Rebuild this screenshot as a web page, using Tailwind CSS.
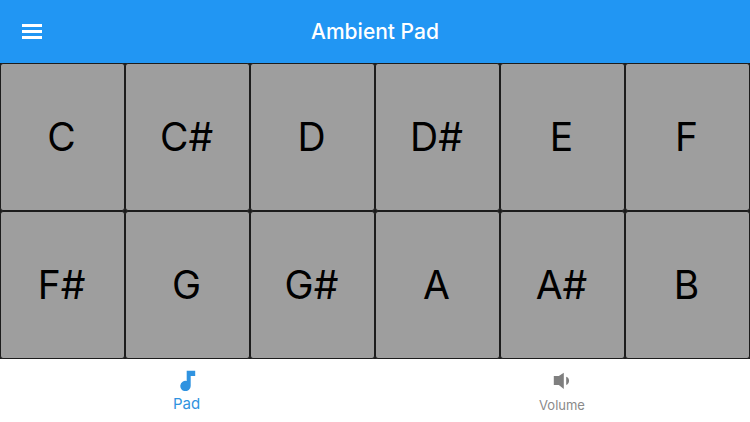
<!DOCTYPE html>
<html lang="en">
<head>
  <meta charset="UTF-8" />
  <title>Ambient Pad</title>
  <script src="https://cdn.jsdelivr.net/npm/@tailwindcss/browser@4"></script>
</head>
<body class="bg-white w-[750px] h-[422px] overflow-hidden flex flex-col font-['Inter',sans-serif]">
  <header class="h-[63px] bg-[#2196f3] flex items-center relative shrink-0">
    <button class="ml-[22px] w-[20px] flex flex-col gap-[3.5px]">
      <span class="block h-[2.5px] bg-white"></span>
      <span class="block h-[2.5px] bg-white"></span>
      <span class="block h-[2.5px] bg-white"></span>
    </button>
    <h1 class="absolute inset-x-0 text-center text-white text-[21px] font-medium">Ambient Pad</h1>
  </header>

  <main class="h-[296px] shrink-0 grid grid-cols-6 grid-rows-2 bg-[#1c1c1c] text-black text-[39px]">
    <div class="bg-[#9e9e9e] border border-[#1c1c1c] rounded-[3px] flex items-center justify-center pr-[2px]">C</div>
    <div class="bg-[#9e9e9e] border border-[#1c1c1c] rounded-[3px] flex items-center justify-center pr-[2px]">C#</div>
    <div class="bg-[#9e9e9e] border border-[#1c1c1c] rounded-[3px] flex items-center justify-center pr-[2px]">D</div>
    <div class="bg-[#9e9e9e] border border-[#1c1c1c] rounded-[3px] flex items-center justify-center pr-[2px]">D#</div>
    <div class="bg-[#9e9e9e] border border-[#1c1c1c] rounded-[3px] flex items-center justify-center pr-[2px]">E</div>
    <div class="bg-[#9e9e9e] border border-[#1c1c1c] rounded-[3px] flex items-center justify-center pr-[2px]">F</div>
    <div class="bg-[#9e9e9e] border border-[#1c1c1c] rounded-[3px] flex items-center justify-center pr-[2px]">F#</div>
    <div class="bg-[#9e9e9e] border border-[#1c1c1c] rounded-[3px] flex items-center justify-center pr-[2px]">G</div>
    <div class="bg-[#9e9e9e] border border-[#1c1c1c] rounded-[3px] flex items-center justify-center pr-[2px]">G#</div>
    <div class="bg-[#9e9e9e] border border-[#1c1c1c] rounded-[3px] flex items-center justify-center pr-[2px]">A</div>
    <div class="bg-[#9e9e9e] border border-[#1c1c1c] rounded-[3px] flex items-center justify-center pr-[2px]">A#</div>
    <div class="bg-[#9e9e9e] border border-[#1c1c1c] rounded-[3px] flex items-center justify-center pr-[2px]">B</div>
  </main>

  <nav class="flex-1 grid grid-cols-2 bg-white">
    <a class="flex flex-col items-center pt-[10px] pr-[2px] text-[#2f93e0]">
      <svg class="w-[22px] h-[22px]" viewBox="0 0 22 22" fill="currentColor">
        <path d="M10.7 1.7H19.2V7H14.7V17A5.2 5.2 0 1 1 10.7 11.9Z"/>
      </svg>
      <span class="text-[15px] leading-[18px] mt-[4px]">Pad</span>
    </a>
    <a class="flex flex-col items-center pt-[10px] pr-[1px] text-[#7f7f7f]">
      <svg class="w-[22px] h-[22px]" viewBox="0 0 22 22" fill="currentColor">
        <path d="M2.8 7H7.8L12.8 3.7V20L7.8 16H2.8Z"/>
        <path d="M15.2 7.7C18.5 8.5 19.5 14 15.2 16Z"/>
      </svg>
      <span class="text-[13px] leading-[18px] mt-[5px] text-[#8a8a8a]">Volume</span>
    </a>
  </nav>
</body>
</html>
